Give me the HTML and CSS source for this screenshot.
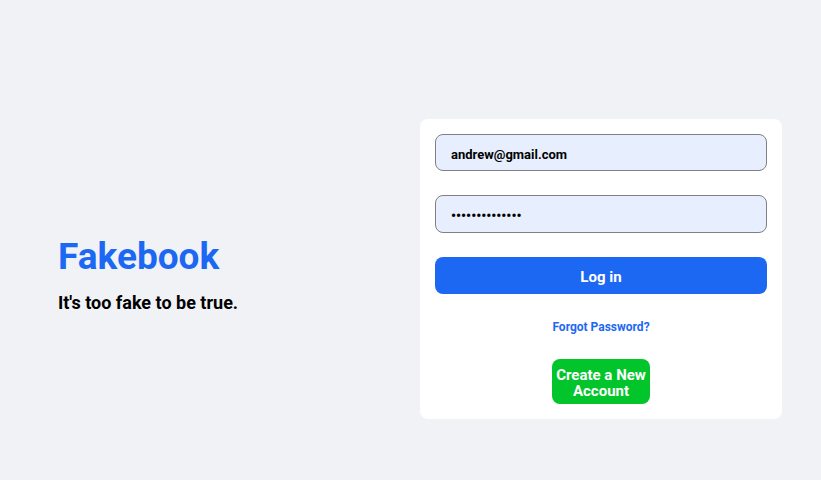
FILE: index.html
```html
<!DOCTYPE html>
<html lang="en">
<head>
  <meta charset="utf-8">
  <meta name="viewport" content="width=device-width, initial-scale=1">
  <title>Fakebook</title>
  <link rel="stylesheet" href="styles.css">
</head>
<body>
  <main class="page">
    <section class="intro">
      <h1 class="brand">Fakebook</h1>
      <p class="tagline">It's too fake to be true.</p>
    </section>
    <form class="card">
      <input class="field" type="email" aria-label="Email" value="andrew@gmail.com">
      <input class="field field-password" type="password" aria-label="Password" value="abcdefghijklmn">
      <button class="login" type="submit">Log in</button>
      <a class="forgot" href="#">Forgot Password?</a>
      <button class="create" type="button">Create a New Account</button>
    </form>
  </main>
</body>
</html>
```
FILE: styles.css
```css
* {
  box-sizing: border-box;
}

body {
  margin: 0;
  background: #f0f2f6;
  color: #000;
  font-family: Roboto, "Liberation Sans", sans-serif;
  font-weight: 700;
}

.page {
  display: grid;
  grid-template-columns: 1fr 1fr;
  align-items: center;
  min-height: 100vh;
  padding: 58px 39px 0 58px;
}

.intro {
  padding-top: 8px;
}

.brand {
  margin: 0;
  color: #1d68f3;
  font-size: 37px;
  line-height: 48px;
}

.tagline {
  margin: 12px 0 0;
  font-size: 18px;
  line-height: 20px;
}

.card {
  display: flex;
  flex-direction: column;
  align-items: center;
  gap: 24px;
  padding: 15px;
  border-radius: 8px;
  background: #fff;
}

.field,
.login {
  width: 100%;
  height: 37px;
  border-radius: 8px;
  font-family: inherit;
  font-weight: 700;
}

.field {
  padding: 4px 15px 0;
  border: 1px solid #808084;
  background: #e7eefe;
  color: #000;
  font-size: 13px;
}

.field-password {
  height: 38px;
  font-size: 14px;
}

.login,
.create {
  border: 0;
  color: #fff;
}

.login {
  padding: 3px 0 0;
  background: #1d68f3;
  font-size: 15px;
}

.forgot {
  padding-top: 2px;
  color: #1d68f3;
  font-size: 12px;
  line-height: 15px;
  text-decoration: none;
}

.create {
  width: 98px;
  padding: 8px 0 5px;
  border-radius: 8px;
  background: #02c52b;
  font-family: inherit;
  font-weight: 700;
  font-size: 15px;
  line-height: 16px;
}
```
